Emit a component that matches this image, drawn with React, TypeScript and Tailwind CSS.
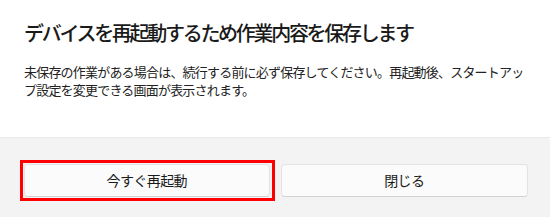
import React from 'react';

const jp = { fontFamily: '"Noto Sans CJK JP", "Noto Sans", sans-serif' };

export default function App() {
  return (
    <div className="w-[550px] h-[217px] bg-white flex flex-col overflow-hidden text-[#1a1a1a]" style={jp}>
      <div className="h-[137px] px-[24px] pt-[19px]">
        <h1 className="text-[20px] leading-[28px] tracking-[-2.3px] whitespace-nowrap font-medium">
          デバイスを再起動するため作業内容を保存します
        </h1>
        <p className="mt-[16px] text-[13px] leading-[18px] tracking-[-0.8px] whitespace-nowrap text-[#222222]">
          未保存の作業がある場合は、続行する前に必ず保存してください。再起動後、スタートアッ
          <br />
          プ設定を変更できる画面が表示されます。
        </p>
      </div>
      <div className="flex-1 bg-[#f3f3f3] border-t border-[#ebebeb] pl-[24px] pr-[22px] pt-[26px]">
        <div className="flex gap-[11px]">
          <div className="relative flex-1">
            <button className="w-full h-[33px] rounded-[4px] bg-[#fbfbfb] border border-[#e3e3e3] border-b-[#d2d2d2] text-[14px] tracking-[-0.6px]">
              今すぐ再起動
            </button>
            <div className="absolute left-[-4px] right-[-5px] top-[-4px] bottom-[-4px] border-[3px] border-[#ff0000]" />
          </div>
          <button className="flex-1 h-[33px] rounded-[4px] bg-[#fbfbfb] border border-[#e3e3e3] border-b-[#d2d2d2] text-[14px] tracking-[-0.6px]">
            閉じる
          </button>
        </div>
      </div>
    </div>
  );
}
